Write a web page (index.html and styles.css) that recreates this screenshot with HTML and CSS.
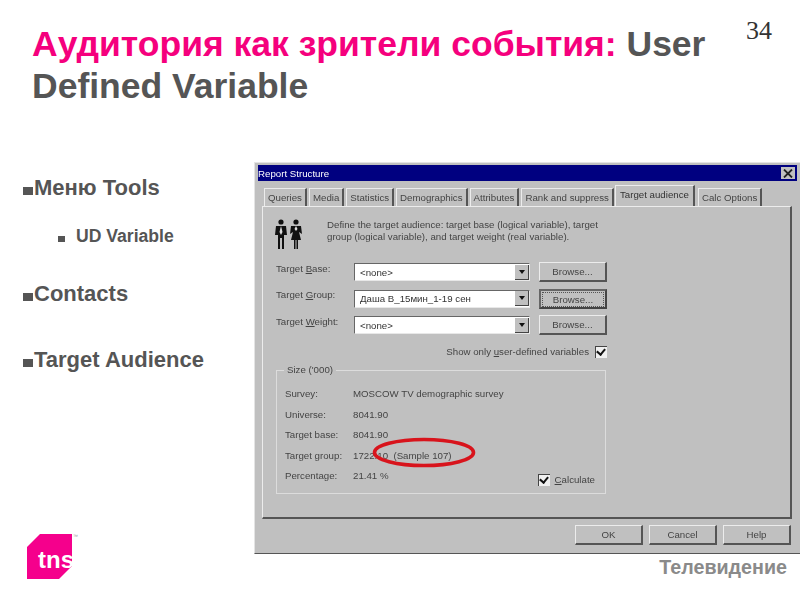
FILE: index.html
```html
<!DOCTYPE html>
<html lang="en">
<head>
  <meta charset="UTF-8">
  <title>Аудитория как зрители события</title>
  <link rel="stylesheet" href="styles.css">
</head>
<body>
  <div class="slide">
    <header class="top">
      <h1 class="title"><span class="pink">Аудитория как зрители события:</span> User Defined Variable</h1>
      <div class="page-num">34</div>
    </header>

    <div class="main">
      <ul class="points">
        <li class="point">Меню Tools</li>
        <li class="subpoint">UD Variable</li>
        <li class="point gap1">Contacts</li>
        <li class="point gap2">Target Audience</li>
      </ul>

      <div class="dialog">
        <div class="titlebar">
          <span>Report Structure</span>
          <span class="close">
            <svg width="10" height="9" viewBox="0 0 10 9"><path d="M1 0.5L9 8.5M9 0.5L1 8.5" stroke="#222" stroke-width="1.8" fill="none"/></svg>
          </span>
        </div>

        <div class="tabs">
          <span class="tab">Queries</span>
          <span class="tab">Media</span>
          <span class="tab">Statistics</span>
          <span class="tab">Demographics</span>
          <span class="tab">Attributes</span>
          <span class="tab">Rank and suppress</span>
          <span class="tab active">Target audience</span>
          <span class="tab">Calc Options</span>
        </div>

        <div class="panel">
          <div class="intro">
            <svg class="people" width="27" height="31" viewBox="0 0 27 31">
              <circle cx="6" cy="3" r="2.6" fill="#111"/>
              <path d="M1 7L11 7L12 16L9 16L9 30L7 30L7 19L5 19L5 30L3 30L3 16L0 16Z" fill="#111"/>
              <path d="M6 7L4.5 13L6 16L7.5 13Z" fill="#ddd"/>
              <circle cx="21" cy="3" r="2.6" fill="#111"/>
              <path d="M16 7L26 7L27 15L24 13L26 21L23 21L23 30L21.5 30L21.5 21L20.5 21L20.5 30L19 30L19 21L16 21L18 13L15 15Z" fill="#111"/>
              <path d="M21 7L19.5 10L21 12L22.5 10Z" fill="#ddd"/>
            </svg>
            <p class="intro-text">Define the target audience: target base (logical variable), target<br>group (logical variable), and target weight (real variable).</p>
          </div>

          <div class="field">
            <label class="field-label">Target <u>B</u>ase:</label>
            <div class="combo"><span>&lt;none&gt;</span><span class="arrow"></span></div>
            <button class="btn browse">Browse...</button>
          </div>
          <div class="field">
            <label class="field-label">Target <u>G</u>roup:</label>
            <div class="combo"><span>Даша В_15мин_1-19 сен</span><span class="arrow"></span></div>
            <button class="btn browse focused"><span class="dotted">Browse...</span></button>
          </div>
          <div class="field">
            <label class="field-label">Target <u>W</u>eight:</label>
            <div class="combo"><span>&lt;none&gt;</span><span class="arrow"></span></div>
            <button class="btn browse">Browse...</button>
          </div>

          <div class="show-only">
            <span>Show only <u>u</u>ser-defined variables</span>
            <span class="check"></span>
          </div>

          <div class="size-box">
            <span class="size-title">Size ('000)</span>
            <div class="size-row"><span>Survey:</span><span>MOSCOW TV demographic survey</span></div>
            <div class="size-row"><span>Universe:</span><span>8041.90</span></div>
            <div class="size-row"><span>Target base:</span><span>8041.90</span></div>
            <div class="size-row"><span>Target group:</span><span>1722.10&nbsp; (Sample 107)</span></div>
            <div class="size-row"><span>Percentage:</span><span>21.41 %</span></div>
            <div class="calc"><span class="check"></span><span><u>C</u>alculate</span></div>
          </div>
        </div>

        <div class="actions">
          <button class="btn">OK</button>
          <button class="btn">Cancel</button>
          <button class="btn">Help</button>
        </div>

        <svg class="ring" width="106" height="32" viewBox="0 0 106 32">
          <ellipse cx="53" cy="15.5" rx="49.5" ry="13" fill="none" stroke="#d8141c" stroke-width="3.6"/>
        </svg>
      </div>
    </div>

    <footer class="bottom">
      <div class="logo-wrap">
        <div class="logo"><span>tns</span></div>
        <span class="tm">™</span>
      </div>
      <div class="section-name">Телевидение</div>
    </footer>
  </div>
</body>
</html>
```

FILE: styles.css
```css
html, body {
  margin: 0;
  padding: 0;
  background: #ffffff;
}

.slide {
  width: 800px;
  height: 600px;
  overflow: hidden;
  font-family: 'Liberation Sans', Arial, sans-serif;
  display: flex;
  flex-direction: column;
}

.top {
  height: 162px;
  display: flex;
  justify-content: space-between;
  padding: 23px 28px 0 32px;
  box-sizing: border-box;
}

.title {
  margin: 0;
  width: 690px;
  font-size: 35.5px;
  line-height: 42px;
  font-weight: bold;
  color: #555555;
}

.pink {
  color: #f5007d;
}

.page-num {
  font-family: 'Liberation Serif', serif;
  font-size: 26px;
  color: #333333;
  margin-top: -7px;
}

.main {
  display: flex;
  height: 392px;
}

.points {
  list-style: none;
  margin: 0;
  padding: 14px 0 0 23px;
  width: 254px;
  box-sizing: border-box;
  color: #555555;
  font-weight: bold;
}

.point {
  font-size: 22px;
  line-height: 23px;
  display: flex;
  align-items: baseline;
}

.point::before {
  content: '';
  width: 10px;
  height: 8px;
  margin-right: 1px;
  background: #555555;
}

.subpoint {
  font-size: 17.6px;
  line-height: 18px;
  margin: 28px 0 0 35px;
  display: flex;
  align-items: baseline;
}

.subpoint::before {
  content: '';
  width: 7px;
  height: 6px;
  margin-right: 11px;
  background: #555555;
}

.gap1 {
  margin-top: 37px;
}

.gap2 {
  margin-top: 43px;
}

/* screenshot of the old windows dialog */
.dialog {
  position: relative;
  width: 546px;
  height: 392px;
  box-sizing: border-box;
  padding: 2px 3px;
  background: #c0c0c0;
  border-top: 1px solid #e4e4e4;
  border-left: 1px solid #e4e4e4;
  border-bottom: 1px solid #555555;
  font-size: 9.7px;
  color: #444444;
  filter: blur(0.5px);
}

.titlebar {
  height: 16px;
  background: #000080;
  color: #ffffff;
  display: flex;
  justify-content: space-between;
  align-items: center;
  padding: 0 2px 0 0;
}

.close {
  width: 14px;
  height: 12px;
  background: #c0c0c0;
  display: flex;
  align-items: center;
  justify-content: center;
}

.tabs {
  display: flex;
  align-items: flex-end;
  height: 25px;
  padding-left: 6px;
}

.tab {
  height: 17px;
  line-height: 17px;
  padding: 0 3px;
  margin-right: 2px;
  border-top: 1px solid #ececec;
  border-left: 1px solid #ececec;
  border-right: 2px solid #555555;
  white-space: nowrap;
}

.tab.active {
  height: 20px;
  line-height: 17px;
  padding: 0 4px 0 4px;
  margin: 0 3px 0 -1px;
  color: #333333;
}

.panel {
  position: relative;
  margin: 0 5px 0 4px;
  width: 530px;
  height: 313px;
  box-sizing: border-box;
  padding: 12px 14px 0 12px;
  border-top: 1px solid #ececec;
  border-left: 1px solid #ececec;
  border-right: 2px solid #555555;
  border-bottom: 2px solid #555555;
}

.intro {
  display: flex;
  height: 43px;
}

.people {
  width: 27px;
}

.intro-text {
  margin: 0 0 0 25px;
  line-height: 12px;
}

.field {
  display: flex;
  align-items: center;
  height: 20px;
  margin-bottom: 6.5px;
}

.field-label {
  width: 78px;
  margin-left: 1px;
  margin-top: -8px;
}

.combo {
  width: 176px;
  height: 18px;
  box-sizing: border-box;
  background: #ffffff;
  border-top: 1px solid #666666;
  border-left: 1px solid #666666;
  border-right: 1px solid #e8e8e8;
  border-bottom: 1px solid #e8e8e8;
  display: flex;
  align-items: center;
  justify-content: space-between;
  padding-left: 5px;
  color: #333333;
}

.arrow {
  width: 14px;
  height: 15px;
  box-sizing: border-box;
  background: #c0c0c0;
  border-right: 1px solid #444444;
  border-bottom: 1px solid #444444;
  display: flex;
  align-items: center;
  justify-content: center;
}

.arrow::after {
  content: '';
  border-left: 3.5px solid transparent;
  border-right: 3.5px solid transparent;
  border-top: 4px solid #111111;
}

.btn {
  width: 68px;
  height: 20px;
  padding: 0;
  background: #c0c0c0;
  font-family: inherit;
  font-size: 9.7px;
  color: #444444;
  border-top: 1px solid #ececec;
  border-left: 1px solid #ececec;
  border-right: 2px solid #555555;
  border-bottom: 2px solid #555555;
}

.browse {
  margin-left: 9px;
}

.focused {
  border: 2px solid #444444;
  border-top-color: #666666;
  border-left-color: #666666;
  padding: 1px;
}

.dotted {
  display: block;
  height: 13px;
  line-height: 13px;
  border: 1px dotted #555555;
}

.show-only {
  display: flex;
  justify-content: flex-end;
  align-items: center;
  gap: 6px;
  margin: 0;
  padding-right: 169px;
  height: 20px;
}

.check {
  width: 12px;
  height: 12px;
  box-sizing: border-box;
  background: #f0f0f0;
  border-top: 1px solid #444444;
  border-left: 1px solid #444444;
  position: relative;
}

.check::after {
  content: '';
  position: absolute;
  left: 2px;
  top: 0;
  width: 4px;
  height: 6px;
  border-right: 2px solid #111111;
  border-bottom: 2px solid #111111;
  transform: rotate(40deg);
}

.size-box {
  position: relative;
  width: 330px;
  height: 124px;
  box-sizing: border-box;
  margin: 8px 0 0 1px;
  padding-top: 13px;
  border: 1px solid #dcdcdc;
}

.size-title {
  position: absolute;
  left: 7px;
  top: -7px;
  padding: 0 3px;
  background: #c0c0c0;
}

.size-row {
  display: flex;
  height: 20.5px;
  align-items: center;
  padding-left: 8px;
}

.size-row span:first-child {
  width: 68px;
}

.calc {
  position: absolute;
  right: 10px;
  bottom: 7px;
  display: flex;
  align-items: center;
  gap: 5px;
}

.actions {
  display: flex;
  justify-content: flex-end;
  gap: 6px;
  padding: 6px 6px 0 0;
}

.ring {
  position: absolute;
  left: 116px;
  top: 274px;
}

.bottom {
  flex: 1;
  display: flex;
  justify-content: space-between;
  padding: 0 13px 0 27px;
}

.logo-wrap {
  position: relative;
}

.logo {
  width: 45px;
  height: 45px;
  margin-top: -20px;
  background: #f5008c;
  clip-path: polygon(13px 0, 100% 0, 100% 32px, 32px 100%, 0 100%, 0 13px);
  display: flex;
  align-items: flex-end;
  justify-content: flex-end;
}

.logo span {
  color: #ffffff;
  font-size: 24px;
  font-weight: bold;
  line-height: 28px;
  margin: 0 -2px 5px 0;
}

.tm {
  position: absolute;
  left: 46px;
  top: -21px;
  font-size: 5px;
  color: #999999;
}

.section-name {
  font-size: 19.7px;
  font-weight: bold;
  color: #8a8a8a;
  margin-top: 2px;
}
```
